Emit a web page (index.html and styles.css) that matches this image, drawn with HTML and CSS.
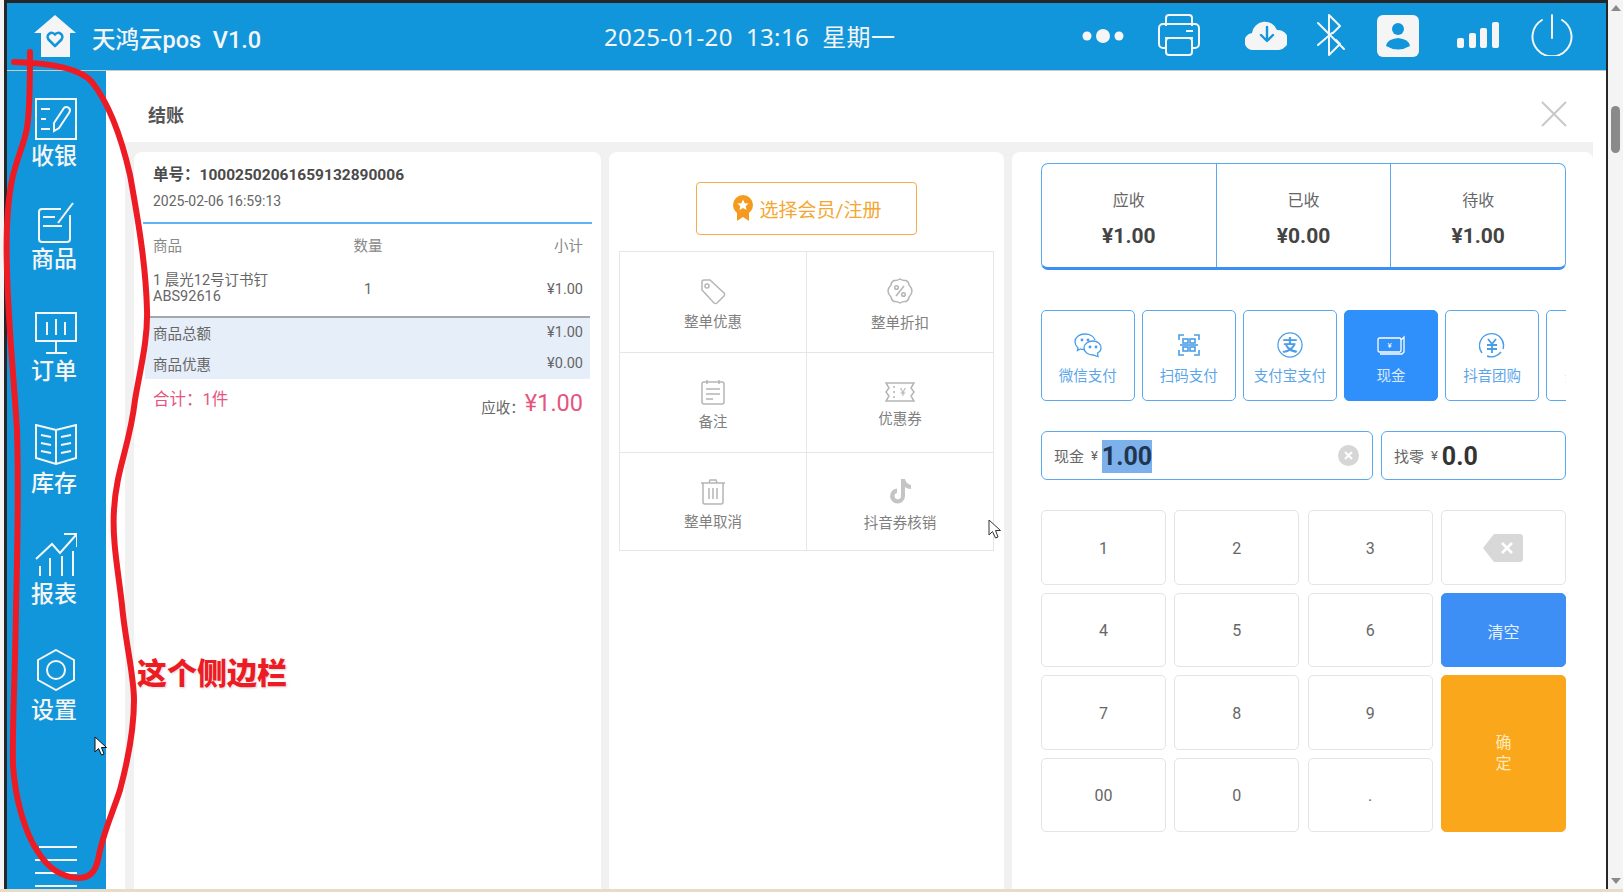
FILE: index.html
```html
<!DOCTYPE html>
<html lang="zh-CN">
<head>
    <meta charset="UTF-8">
    <meta name="viewport" content="width=device-width, initial-scale=1.0">
    <title>天鸿云pos</title>
    <link rel="stylesheet" href="styles.css">
</head>
<body>
<div class="screen">
    <div class="window">
        <div class="app">
            <header class="topbar">
                <div class="brand">
                    <svg class="logo" viewBox="0 0 42 42"><path d="M21 0 L42 18 H36 V42 H7 V18 H0 Z" fill="#f5f5f5"/><path d="M21 31 L14.5 24.5 a4 4 0 0 1 6.5 -5 a4 4 0 0 1 6.5 5 Z" fill="none" stroke="#1296db" stroke-width="2.6" stroke-linejoin="round"/></svg>
                    <span class="brand-name">天鸿云pos&nbsp; V1.0</span>
                </div>
                <div class="clock">2025-01-20&nbsp; 13:16&nbsp; 星期一</div>
                <div class="status-icons">
                    <svg class="icon-dots" width="42" height="14" viewBox="0 0 42 14"><circle cx="5" cy="7" r="4.5" fill="#f5f5f5"/><circle cx="21" cy="7" r="7" fill="#f5f5f5"/><circle cx="37" cy="7" r="4.5" fill="#f5f5f5"/></svg>
                    <svg class="icon-printer" width="42" height="42" viewBox="0 0 42 42" fill="none" stroke="#f5f5f5" stroke-width="2"><path d="M8 12 V4 a3 3 0 0 1 3 -3 H31 a3 3 0 0 1 3 3 V12"/><rect x="1" y="10" width="40" height="24" rx="4"/><path d="M7 24 H35"/><rect x="8" y="24" width="26" height="17" rx="3" fill="#1296db"/><path d="M28 17 H35"/></svg>
                    <svg class="icon-cloud" width="42" height="30" viewBox="0 0 42 30"><path d="M9 30 a8.5 8.5 0 0 1 -2 -17 a13 13 0 0 1 25 -3 a10 10 0 0 1 2 20 Z" fill="#f5f5f5"/><path d="M22 7 V20 M16 15 L22 21 L28 15" fill="none" stroke="#1296db" stroke-width="2.4" stroke-linecap="round" stroke-linejoin="round"/></svg>
                    <svg class="icon-bt" width="28" height="42" viewBox="0 0 28 42" fill="none" stroke="#f5f5f5" stroke-width="2" stroke-linecap="round" stroke-linejoin="round"><path d="M1 9 L27 35 M1 31 L15 19 M12 1 V41 L23 30 L19 26 M12 1 L23 12 L16 19"/></svg>
                    <svg class="icon-user" width="42" height="42" viewBox="0 0 42 42"><rect width="42" height="42" rx="6" fill="#f5f5f5"/><circle cx="21" cy="14" r="6" fill="#1296db"/><path d="M9 31 Q10 24 21 23 Q32 24 33 31 Q21 38 9 31 Z" fill="#1296db"/></svg>
                    <svg class="icon-signal" width="42" height="26" viewBox="0 0 42 26" fill="#f5f5f5"><rect x="0" y="16" width="7" height="10" rx="2"/><rect x="12" y="11" width="7" height="15" rx="2"/><rect x="23" y="6" width="7" height="20" rx="2"/><rect x="35" y="0" width="7" height="26" rx="2"/></svg>
                    <svg class="icon-power" width="42" height="42" viewBox="0 0 42 42" fill="none" stroke="#f5f5f5" stroke-width="2" stroke-linecap="round"><path d="M11 6 A19.5 19.5 0 1 0 31 6"/><path d="M21 1 V24"/></svg>
                </div>
            </header>

            <div class="workspace">
                <nav class="sidebar">
                    <a class="nav-item">
                        <svg width="42" height="42" viewBox="0 0 42 42" fill="none" stroke="#f5f5f5" stroke-width="2"><rect x="1" y="1" width="40" height="40"/><path d="M6 11 H15 M6 21 H11 M6 31 H15"/><path d="M19 33 V25 L29 10 Q31 8 34 10 Q36 12 34 15 L24 30 Z"/></svg>
                        <span>收银</span>
                    </a>
                    <a class="nav-item">
                        <svg width="42" height="42" viewBox="0 0 42 42" fill="none" stroke="#f5f5f5" stroke-width="2"><path d="M26 7 H7 a3 3 0 0 0 -3 3 V37 a3 3 0 0 0 3 3 H32 a3 3 0 0 0 3 -3 V13"/><path d="M23 21 L38 1"/><path d="M8 15 H20 M8 24 H27"/></svg>
                        <span>商品</span>
                    </a>
                    <a class="nav-item">
                        <svg width="42" height="42" viewBox="0 0 42 42" fill="none" stroke="#f5f5f5" stroke-width="2"><rect x="1" y="1" width="40" height="28"/><path d="M12 10 V23 M21 7 V23 M30 10 V23 M21 29 V40 M11 41 H32"/></svg>
                        <span>订单</span>
                    </a>
                    <a class="nav-item">
                        <svg width="42" height="42" viewBox="0 0 42 42" fill="none" stroke="#f5f5f5" stroke-width="2"><path d="M1 1 L21 6 L41 1 V34 L21 40 L1 34 Z M21 6 V40"/><path d="M6 11 L16 13 M6 19 L16 21 M6 27 L16 29 M36 11 L26 13 M36 19 L26 21 M36 27 L26 29"/></svg>
                        <span>库存</span>
                    </a>
                    <a class="nav-item">
                        <svg width="42" height="43" viewBox="0 0 42 43" fill="none" stroke="#f5f5f5" stroke-width="2"><path d="M1 26 L17 11 L25 20 L41 2"/><path d="M29 1 H42 V14"/><path d="M5 33 V43 M15 25 V43 M27 23 V43 M38 18 V43"/></svg>
                        <span>报表</span>
                    </a>
                    <a class="nav-item">
                        <svg width="42" height="42" viewBox="0 0 42 42" fill="none" stroke="#f5f5f5" stroke-width="2"><path d="M21 1 L39 11 V31 L21 41 L3 31 V11 Z"/><circle cx="21" cy="21" r="9"/></svg>
                        <span>设置</span>
                    </a>
                    <div class="nav-menu"><i class="short"></i><i></i><i></i><i></i></div>
                </nav>

                <main class="content">
                    <div class="modal-head">
                        <h1>结账</h1>
                        <svg width="26" height="26" viewBox="0 0 26 26" stroke="#c8c8c8" stroke-width="2"><path d="M1 1 L25 25 M25 1 L1 25"/></svg>
                    </div>
                    <div class="modal-body">
                        <section class="card order">
                            <div class="order-no">单号：10002502061659132890006</div>
                            <div class="order-time">2025-02-06 16:59:13</div>
                            <div class="order-table">
                                <div class="row head"><span>商品</span><span>数量</span><span>小计</span></div>
                                <div class="row item">
                                    <span class="item-name">1 晨光12号订书钉<br>ABS92616</span>
                                    <span>1</span>
                                    <span>¥1.00</span>
                                </div>
                            </div>
                            <div class="band">
                                <div class="band-row"><span>商品总额</span><span>¥1.00</span></div>
                                <div class="band-row"><span>商品优惠</span><span>¥0.00</span></div>
                            </div>
                            <div class="total">
                                <span class="total-count">合计：1件</span>
                                <span class="total-due">应收：<b>¥1.00</b></span>
                            </div>
                        </section>

                        <section class="card actions">
                            <button class="member-btn">
                                <svg width="22" height="26" viewBox="0 0 22 26"><path d="M5 16 V26 L11 22 L17 26 V16 Z" fill="#f39a1f"/><circle cx="11" cy="10" r="10" fill="#f39a1f"/><path d="M11 4.5 L12.7 8.2 L16.6 8.6 L13.7 11.2 L14.5 15 L11 13.1 L7.5 15 L8.3 11.2 L5.4 8.6 L9.3 8.2 Z" fill="#fff"/></svg>
                                选择会员/注册
                            </button>
                            <div class="action-grid">
                                <div class="action">
                                    <svg width="26" height="26" viewBox="0 0 26 26" fill="none" stroke="#b5b5b5" stroke-width="1.5"><path d="M2 3 a2 2 0 0 1 2 -2 H10 L24 14 a2.5 2.5 0 0 1 0 3 L17 24 a2.5 2.5 0 0 1 -3 0 L2 11 Z"/><circle cx="7" cy="7" r="2"/></svg>
                                    <span>整单优惠</span>
                                </div>
                                <div class="action">
                                    <svg width="26" height="26" viewBox="0 0 26 26" fill="none" stroke="#b5b5b5" stroke-width="1.5"><path d="M13 1 Q16 3 19 2.5 Q22 4 22 7 Q25 10 25 13 Q25 16 22 19 Q22 22 19 23.5 Q16 23 13 25 Q10 23 7 23.5 Q4 22 4 19 Q1 16 1 13 Q1 10 4 7 Q4 4 7 2.5 Q10 3 13 1 Z"/><circle cx="9.5" cy="9.5" r="1.8"/><circle cx="16.5" cy="16.5" r="1.8"/><path d="M17 8 L9 18"/></svg>
                                    <span class="low">整单折扣</span>
                                </div>
                                <div class="action">
                                    <svg width="24" height="26" viewBox="0 0 24 26" fill="none" stroke="#b5b5b5" stroke-width="1.5"><rect x="1" y="3" width="22" height="22" rx="2"/><path d="M6 1 V5 M18 1 V5 M5 10 H19 M5 15 H19 M5 20 H12"/></svg>
                                    <span>备注</span>
                                </div>
                                <div class="action">
                                    <svg width="30" height="20" viewBox="0 0 30 20" fill="none" stroke="#b5b5b5" stroke-width="1.5"><path d="M1 1 H29 L26 6 L29 10 L26 14 L29 19 H1 L4 14 L1 10 L4 6 Z"/><path d="M9 4 V6 M9 9 V11 M9 14 V16"/><text x="18" y="14" font-size="11" fill="#b5b5b5" stroke="none" text-anchor="middle">¥</text></svg>
                                    <span>优惠券</span>
                                </div>
                                <div class="action">
                                    <svg width="26" height="26" viewBox="0 0 26 26" fill="none" stroke="#b5b5b5" stroke-width="1.5"><path d="M1 4 H25 M9 4 L10 1 H16 L17 4"/><path d="M3 4 V23 a2 2 0 0 0 2 2 H21 a2 2 0 0 0 2 -2 V4"/><path d="M9 9 V20 M13 9 V20 M17 9 V20"/></svg>
                                    <span>整单取消</span>
                                </div>
                                <div class="action">
                                    <svg width="24" height="26" viewBox="0 0 24 26"><path d="M13 1 H17 Q18 6 23 7 V11 Q19 11 17 9 V18 A7.5 7.5 0 1 1 9 10.5 V15 A3.2 3.2 0 1 0 13 18 Z" fill="#c4c4c4"/></svg>
                                    <span class="low">抖音券核销</span>
                                </div>
                            </div>
                        </section>

                        <section class="card checkout">
                            <div class="summary">
                                <div class="summary-cell"><span>应收</span><b>¥1.00</b></div>
                                <div class="summary-cell"><span>已收</span><b>¥0.00</b></div>
                                <div class="summary-cell"><span>待收</span><b>¥1.00</b></div>
                            </div>

                            <div class="pay-row">
                                <div class="pay">
                                    <svg width="28" height="24" viewBox="0 0 28 24" fill="none" stroke="#4a9de8" stroke-width="1.3"><path d="M11 1 C5 1 1 4.5 1 9 C1 11.5 2.5 13.5 4 15 L3.5 17.5 L6.5 16 Q8 16.5 10 16.5"/><path d="M19 8 C14 8 10 11 10 15 C10 19 14 22 19 22 L24 23.5 L23.5 20 C25.5 19 27 17 27 15 C27 11 23.5 8 19 8 Z"/><path d="M21 7 C20 3.5 16 1 11 1"/><circle cx="8" cy="7" r=".8"/><circle cx="14" cy="7" r=".8"/><circle cx="16" cy="14" r=".8"/><circle cx="22" cy="14" r=".8"/></svg>
                                    <span>微信支付</span>
                                </div>
                                <div class="pay">
                                    <svg width="22" height="22" viewBox="0 0 22 22" fill="none" stroke="#4a9de8" stroke-width="1.6"><path d="M1 6 V1 H6 M16 1 H21 V6 M21 16 V21 H16 M6 21 H1 V16"/><rect x="5" y="5" width="5" height="4"/><rect x="12" y="5" width="5" height="4"/><rect x="5" y="13" width="5" height="4"/><rect x="12" y="13" width="5" height="4"/><path d="M2 11 H20"/></svg>
                                    <span>扫码支付</span>
                                </div>
                                <div class="pay">
                                    <svg width="28" height="28" viewBox="0 0 28 28" fill="none" stroke="#4a9de8" stroke-width="1.3"><circle cx="14" cy="14" r="13"/><text x="14" y="20" font-size="17" font-weight="700" fill="#4a9de8" stroke="none" text-anchor="middle">支</text></svg>
                                    <span>支付宝支付</span>
                                </div>
                                <div class="pay active">
                                    <svg width="28" height="20" viewBox="0 0 28 20" fill="none" stroke="#fff" stroke-width="1.3"><rect x="1" y="3" width="23" height="14" rx="1.5"/><path d="M24 5 L27 2 V17 L25 19 H3"/><text x="12.5" y="13" font-size="8" fill="#fff" stroke="none" text-anchor="middle">¥</text></svg>
                                    <span>现金</span>
                                </div>
                                <div class="pay">
                                    <svg width="26" height="26" viewBox="0 0 26 26" fill="none" stroke="#4a9de8" stroke-width="1.4"><path d="M3 21 A12 12 0 1 1 24 17"/><path d="M22 20 A12 12 0 0 1 8 24"/><path d="M9 7 L13 12 L17 7 M8 13 H18 M8 17 H18 M13 12 V21" stroke-width="1.8"/></svg>
                                    <span>抖音团购</span>
                                </div>
                                <div class="pay"><span class="clip-label">美团团购</span></div>
                            </div>

                            <div class="cash-row">
                                <div class="field grow">
                                    <span class="field-label">现金</span><span class="field-yen">¥</span><span class="field-value selected">1.00</span>
                                    <svg class="field-clear" width="21" height="21" viewBox="0 0 21 21"><circle cx="10.5" cy="10.5" r="10.5" fill="#d6d6d6"/><path d="M7 7 L14 14 M14 7 L7 14" stroke="#fff" stroke-width="2"/></svg>
                                </div>
                                <div class="field change">
                                    <span class="field-label">找零</span><span class="field-yen">¥</span><span class="field-value">0.0</span>
                                </div>
                            </div>

                            <div class="keypad">
                                <button class="key">1</button>
                                <button class="key">2</button>
                                <button class="key">3</button>
                                <button class="key">
                                    <svg width="40" height="28" viewBox="0 0 40 28"><path d="M11 0 H37 a3 3 0 0 1 3 3 V25 a3 3 0 0 1 -3 3 H11 L0 14 Z" fill="#d8d8d8"/><path d="M19 9 L29 19 M29 9 L19 19" stroke="#fff" stroke-width="2.6"/></svg>
                                </button>
                                <button class="key">4</button>
                                <button class="key">5</button>
                                <button class="key">6</button>
                                <button class="key clear">清空</button>
                                <button class="key">7</button>
                                <button class="key">8</button>
                                <button class="key">9</button>
                                <button class="key confirm"><span>确定</span></button>
                                <button class="key">00</button>
                                <button class="key">0</button>
                                <button class="key">.</button>
                            </div>
                        </section>
                    </div>
                </main>
            </div>
        </div>

        <div class="scrollbar">
            <i class="arrow-up"></i>
            <i class="thumb"></i>
            <i class="arrow-down"></i>
        </div>
    </div>
    <div class="taskbar-edge"></div>

    <!-- hand-drawn note on top of the capture -->
    <svg class="scribble" width="1623" height="892" viewBox="0 0 1623 892" fill="none" stroke="#ed1c24" stroke-width="6" stroke-linecap="round" stroke-linejoin="round">
        <path d="M30 52 C30 85 30 110 27 128 C24 145 16 160 12 180 C7 205 6 240 7 270 C8 320 14 380 17 430 C19 500 17 560 16 610 C15 680 12 730 13 765 C15 800 26 835 38 852 C48 868 60 877 78 878 C90 878 95 872 98 860 C102 835 112 815 120 790 C128 760 134 730 134 700 C134 675 125 640 122 605 C118 570 112 540 114 510 C116 470 130 445 135 400 C140 370 148 340 147 310 C146 270 140 230 130 175 C122 140 110 105 92 82 C80 68 50 63 14 62"/>
    </svg>
    <div class="scribble-note">这个侧边栏</div>

    <svg class="cursor cursor-side" width="14" height="20" viewBox="0 0 14 20"><path d="M1 1 V16 L4.5 12.5 L7.5 19 L10 18 L7.5 11.5 L12.5 11.5 Z" fill="#fff" stroke="#111" stroke-width="1"/></svg>
    <svg class="cursor cursor-main" width="14" height="20" viewBox="0 0 14 20"><path d="M1 1 V16 L4.5 12.5 L7.5 19 L10 18 L7.5 11.5 L12.5 11.5 Z" fill="#fff" stroke="#333" stroke-width="1"/></svg>
</div>
</body>
</html>
```

FILE: styles.css
```css
:root {
    --brand: #1296db;
    --icon-light: #f5f5f5;
    --line-blue: #5aa9ee;
    --pay-blue: #2f8ffb;
    --text-dark: #444;
    --text-mid: #666;
    --text-soft: #888;
    --pink: #e4567f;
}

* {
    margin: 0;
    padding: 0;
    box-sizing: border-box;
    font-family: Roboto, 'Noto Sans CJK SC', sans-serif;
}

body {
    background-color: #fff;
    overflow: hidden;
}

.screen {
    position: relative;
    width: 1623px;
    height: 892px;
    overflow: hidden;
    display: flex;
    flex-direction: column;
    background-color: #f4f4f4;
}

.window {
    flex: 1;
    min-height: 0;
    display: flex;
    padding-left: 4px;
}

.app {
    width: 1604px;
    display: flex;
    flex-direction: column;
    border-top: 3px solid #262626;
    border-left: 3px solid #262626;
    border-right: 2px solid #262626;
    background-color: #fff;
}

.taskbar-edge {
    height: 3px;
    background-color: #e6dcc8;
}

/* top bar */
.topbar {
    flex: none;
    height: 68px;
    display: flex;
    align-items: center;
    background-color: var(--brand);
    border-bottom: 1px solid #c9c9c9;
}

.brand {
    width: 570px;
    display: flex;
    align-items: center;
    padding-left: 27px;
}

.logo {
    width: 42px;
    height: 42px;
    margin-top: -2px;
}

.brand-name {
    margin-left: 16px;
    margin-top: 3px;
    font-size: 23.5px;
    font-weight: 500;
    color: var(--icon-light);
}

.clock {
    width: 474px;
    margin-left: 27px;
    margin-top: -2px;
    font-size: 24px;
    letter-spacing: .35px;
    color: var(--icon-light);
    font-family: 'Noto Sans', 'Noto Sans CJK SC', sans-serif;
}

.status-icons {
    position: relative;
    flex: 1;
    height: 100%;
    display: flex;
    align-items: center;
}

.icon-dots { margin-left: 4px; margin-top: -1px; }
.icon-printer { margin-left: 34px; margin-top: -3px; }
.icon-cloud { margin-left: 45px; margin-top: -3px; }
.icon-bt { margin-left: 30px; margin-top: -3px; }
.icon-user { margin-left: 32px; margin-top: -1px; }
.icon-signal { margin-left: 38px; margin-top: -3px; }
.icon-power { margin-left: 32px; margin-top: -3px; }

/* side bar */
.workspace {
    flex: 1;
    min-height: 0;
    display: flex;
}

.sidebar {
    flex: none;
    width: 99px;
    padding: 27px 5px 0 0;
    background-color: var(--brand);
    display: flex;
    flex-direction: column;
    align-items: center;
    overflow: hidden;
}

.nav-item {
    display: flex;
    flex-direction: column;
    align-items: center;
    color: var(--icon-light);
}

.nav-item svg {
    margin-left: 3px;
}

.nav-item span {
    margin-top: 2px;
    font-size: 23px;
    line-height: 30px;
    font-weight: 500;
}

.nav-item:nth-child(2) { margin-top: 30px; }
.nav-item:nth-child(3) { margin-top: 37px; }
.nav-item:nth-child(4) { margin-top: 37px; }
.nav-item:nth-child(5) { margin-top: 34px; }
.nav-item:nth-child(6) { margin-top: 39px; }

.nav-item:nth-child(2) span { margin-top: 1px; }
.nav-item:nth-child(3) span { margin-top: 3px; }
.nav-item:nth-child(4) span { margin-top: 3px; }
.nav-item:nth-child(5) span { margin-top: 4px; }
.nav-item:nth-child(6) span { margin-top: 5px; }

.nav-menu {
    margin-top: 120px;
    margin-left: 3px;
    width: 42px;
    display: flex;
    flex-direction: column;
    align-items: flex-end;
    gap: 11px;
}

.nav-menu i {
    display: block;
    width: 42px;
    height: 2px;
    background-color: var(--icon-light);
}

.nav-menu .short {
    width: 38px;
}

/* checkout dialog */
.content {
    flex: 1;
    min-width: 0;
    padding: 0 13px 0 19px;
    display: flex;
    flex-direction: column;
}

.modal-head {
    flex: none;
    height: 71px;
    padding: 15px 26px 0 23px;
    display: flex;
    align-items: center;
    justify-content: space-between;
}

.modal-head h1 {
    font-size: 18px;
    font-weight: 700;
    color: #555;
}

.modal-body {
    flex: 1;
    min-height: 0;
    display: flex;
    gap: 8px;
    padding: 10px 0 0 9px;
    background-color: #f1f1f1;
}

.card {
    background-color: #fff;
    border-radius: 8px 8px 0 0;
}

/* order card */
.order {
    width: 467px;
    padding-top: 13px;
}

.order-no {
    padding-left: 19px;
    font-size: 15.5px;
    line-height: 20px;
    font-weight: 700;
    color: #4a4a4a;
}

.order-time {
    padding-left: 19px;
    margin-top: 6px;
    font-size: 14px;
    line-height: 20px;
    color: var(--text-mid);
}

.order-table {
    margin: 11px 9px 0;
    padding: 13px 9px 0 10px;
    border-top: 2px solid #62b3f3;
}

.row {
    display: grid;
    grid-template-columns: 1fr auto 1fr;
    align-items: center;
    font-size: 14.5px;
    color: var(--text-mid);
}

.row span:last-child {
    text-align: right;
}

.row.head {
    line-height: 20px;
    color: var(--text-soft);
}

.row.item {
    margin-top: 16px;
    padding-bottom: 10.5px;
}

.item-name {
    display: block;
    line-height: 16px;
}

.band {
    margin: 0 11px;
    padding: 0 7px 0 8px;
    border-top: 2px solid #a4a8ae;
    background-color: #e6eef9;
}

.band-row {
    height: 30.5px;
    display: flex;
    align-items: center;
    justify-content: space-between;
    font-size: 14.5px;
    color: var(--text-mid);
}

.total {
    padding: 9px 18px 0 19px;
    display: flex;
    justify-content: space-between;
    align-items: flex-start;
}

.total-count {
    font-size: 16.5px;
    line-height: 24px;
    color: var(--pink);
}

.total-due {
    font-size: 14.5px;
    line-height: 30px;
    color: var(--text-mid);
}

.total-due b {
    font-size: 23.5px;
    font-weight: 400;
    vertical-align: 2px;
    color: var(--pink);
}

/* action card */
.actions {
    width: 395px;
    padding: 30px 10px 0;
}

.member-btn {
    display: flex;
    align-items: center;
    justify-content: center;
    gap: 6px;
    width: 221px;
    height: 53px;
    margin: 0 auto 16px;
    padding-bottom: 1px;
    border: 1px solid #f5ae45;
    border-radius: 4px;
    background-color: #fff;
    font-size: 19px;
    color: #f5a733;
}

.action-grid {
    display: grid;
    grid-template-columns: 187px 1fr;
    grid-template-rows: 100.5px 100.5px 97px;
    border: 1px solid #e6e6e6;
    width: 375px;
}

.action {
    display: flex;
    flex-direction: column;
    align-items: center;
    justify-content: center;
    gap: 5px;
    padding-top: 6px;
    font-size: 14.5px;
    color: #808080;
    border-bottom: 1px solid #e6e6e6;
}

.action:nth-child(odd) {
    border-right: 1px solid #e6e6e6;
}

.action:nth-last-child(-n+2) {
    border-bottom: none;
}

.action .low {
    margin-top: 2px;
}

/* pay card */
.checkout {
    flex: 1;
    min-width: 0;
    padding: 11px 27px 0 29px;
}

.summary {
    height: 107px;
    display: flex;
    border: 1px solid var(--line-blue);
    border-bottom: 3px solid #3a8ff5;
    border-radius: 7px;
}

.summary-cell {
    flex: 1;
    display: flex;
    flex-direction: column;
    align-items: center;
    padding-top: 25px;
    font-size: 16px;
    line-height: 24px;
    color: var(--text-mid);
}

.summary-cell + .summary-cell {
    border-left: 1px solid var(--line-blue);
}

.summary-cell b {
    margin-top: 11px;
    font-size: 21px;
    font-weight: 700;
    color: #444;
}

.pay-row {
    margin-top: 40px;
    display: flex;
    gap: 7.6px;
    overflow: hidden;
}

.pay {
    flex: none;
    width: 93.5px;
    height: 91px;
    display: flex;
    flex-direction: column;
    align-items: center;
    justify-content: center;
    gap: 6px;
    padding-top: 6px;
    border: 1px solid var(--line-blue);
    border-radius: 5px;
    font-size: 14.5px;
    color: #5ba6ea;
}

.pay svg {
    height: 26px;
}

.pay.active {
    background-color: var(--pay-blue);
    border-color: var(--pay-blue);
    color: #d9eaff;
}

.clip-label {
    margin-top: 32px;
    white-space: nowrap;
    color: #d5e6f7;
}

.cash-row {
    margin-top: 30px;
    display: flex;
    gap: 8px;
}

.field {
    position: relative;
    height: 49px;
    display: flex;
    align-items: center;
    padding-left: 12px;
    border: 1px solid var(--line-blue);
    border-radius: 6px;
}

.field.grow {
    flex: 1;
}

.field.change {
    width: 185px;
}

.field-label {
    font-size: 15px;
    color: var(--text-mid);
}

.field-yen {
    margin-left: 7px;
    margin-right: 4px;
    font-size: 13px;
    color: var(--text-mid);
}

.field-value {
    margin-top: 2px;
    font-size: 25px;
    font-weight: 700;
    line-height: 33px;
    color: #333;
}

.field-value.selected {
    background-color: #7db1ec;
    color: #1f3550;
}

.field-clear {
    position: absolute;
    right: 13px;
    top: 13px;
}

.keypad {
    margin-top: 30px;
    display: grid;
    grid-template-columns: repeat(4, 1fr);
    grid-template-rows: repeat(4, 74.5px);
    gap: 8px 8.3px;
}

.key {
    display: flex;
    align-items: center;
    justify-content: center;
    padding-top: 2px;
    border: 1px solid #e4e4e4;
    border-radius: 5px;
    background-color: #fff;
    font-size: 16px;
    color: #666;
}

.key.clear {
    background-color: #3d8ef5;
    border-color: #3d8ef5;
    color: #e6f1ff;
}

.key.confirm {
    grid-row: span 2;
    background-color: #fba71b;
    border-color: #fba71b;
    color: #ffe9b8;
}

.key.confirm span {
    width: 1em;
    line-height: 21px;
    margin-top: -4px;
}

/* browser scroll bar */
.scrollbar {
    flex: 1;
    position: relative;
    display: flex;
    flex-direction: column;
    align-items: center;
    background-color: #f4f4f4;
}

.arrow-up {
    margin-top: 5px;
    border-left: 5px solid transparent;
    border-right: 5px solid transparent;
    border-bottom: 6px solid #8a8a8a;
}

.thumb {
    margin-top: 95px;
    width: 9px;
    height: 47px;
    border-radius: 5px;
    background-color: #8a8a8a;
}

.arrow-down {
    margin-top: auto;
    margin-bottom: 5px;
    border-left: 5px solid transparent;
    border-right: 5px solid transparent;
    border-top: 6px solid #8a8a8a;
}

/* annotation layer */
.scribble {
    position: absolute;
    left: 0;
    top: 0;
    pointer-events: none;
}

.scribble-note {
    position: absolute;
    left: 137px;
    top: 652px;
    font-size: 30px;
    line-height: 44px;
    font-weight: 900;
    color: #ed1c24;
    text-shadow: 0 0 3px #fff, 1px 1px 2px #ccc;
}

.cursor {
    position: absolute;
}

.cursor-side {
    left: 94px;
    top: 736px;
}

.cursor-main {
    left: 988px;
    top: 519px;
}
```
